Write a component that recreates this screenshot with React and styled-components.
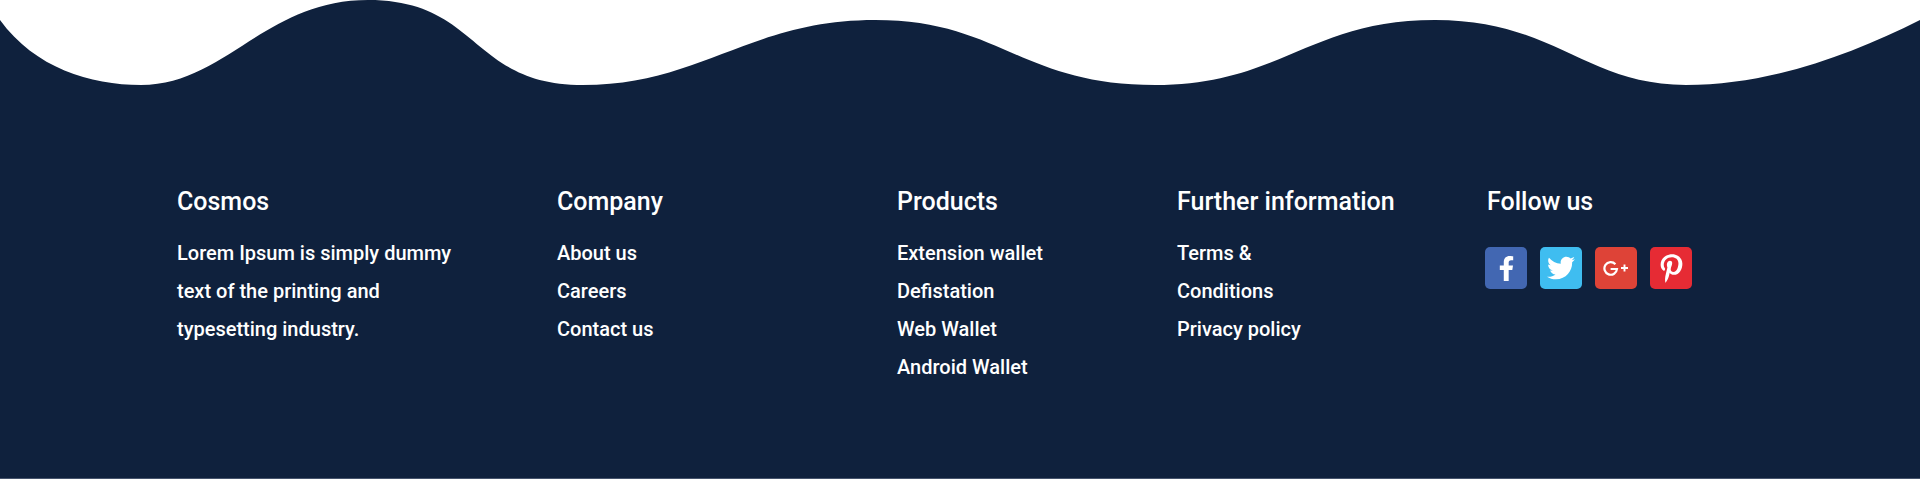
import { createGlobalStyle } from "styled-components";
import styled from "styled-components";
import { FaFacebookF, FaTwitter, FaPinterestP } from "react-icons/fa";

const GlobalStyle = createGlobalStyle`
  html, body {
    margin: 0;
    padding: 0;
    background: #ffffff;
  }
`;

const Footer = styled.footer`
  width: 1920px;
  height: 479px;
  font-family: Roboto, "Liberation Sans", sans-serif;
  color: #ffffff;
  display: flex;
  flex-direction: column;
  overflow: hidden;
`;

const Wave = styled.svg`
  display: block;
  flex: none;
  width: 1920px;
  height: 90px;
`;

const Body = styled.div`
  flex: 1;
  background: #0f213d;
  border-bottom: 1px solid #46546d;
  padding: 95px 0 0 177px;
  display: grid;
  grid-template-columns: 380px 340px 280px 310px 300px;
`;

const Title = styled.h4`
  margin: 0 0 15px;
  font-size: 25px;
  font-weight: 500;
  line-height: 34px;
`;

const Column = styled.div`
  min-width: 0;
`;

const Text = styled.p`
  margin: 0;
  max-width: 290px;
  font-size: 20px;
  font-weight: 500;
  line-height: 38px;
`;

const LinkList = styled.ul`
  margin: 0;
  padding: 0;
  list-style: none;
  max-width: ${(p) => p.$maxWidth || "none"};
`;

const LinkItem = styled.li`
  font-size: 20px;
  font-weight: 500;
  line-height: 38px;
`;

const Socials = styled.div`
  display: flex;
  gap: 13px;
  margin: 0 0 0 -2px;
  padding-top: 13px;
`;

const SocialButton = styled.a`
  width: 42px;
  height: 42px;
  border-radius: 5px;
  background: ${(p) => p.$color};
  color: #ffffff;
  font-size: ${(p) => p.$size}px;
  display: flex;
  align-items: center;
  justify-content: center;
`;

const GooglePlusIcon = () => (
  <svg width="26" height="16" viewBox="0 0 26 16" fill="none" stroke="currentColor" strokeWidth="2.2">
    <path d="M12.4 4.2 A6.3 6.3 0 1 0 14 9 H7.6" />
    <path d="M18 8 H25 M21.5 4.6 V11.4" strokeWidth="1.9" />
  </svg>
);

const columns = [
  { title: "Company", links: ["About us", "Careers", "Contact us"] },
  { title: "Products", links: ["Extension wallet", "Defistation", "Web Wallet", "Android Wallet"] },
  { title: "Further information", links: ["Terms & Conditions", "Privacy policy"], maxWidth: "140px" },
];

const socials = [
  { color: "#4267b2", size: 25, icon: <FaFacebookF /> },
  { color: "#3fbdf0", size: 28, icon: <FaTwitter /> },
  { color: "#de4337", size: 26, icon: <GooglePlusIcon /> },
  { color: "#e62b34", size: 29, icon: <FaPinterestP /> },
];

export default function App() {
  return (
    <>
      <GlobalStyle />
      <Footer>
        <Wave viewBox="0 0 1920 90" preserveAspectRatio="none">
          <path
            fill="#0f213d"
            d="M0 20 C35 68 90 85 141 85 C225 85 265 0 368 0 C480 0 470 85 583 85 C700 85 750 20 875 20 C1000 20 1020 85 1155 85 C1280 85 1310 20 1435 20 C1555 20 1585 85 1686 85 C1770 85 1850 55 1920 20 V90 H0 Z"
          />
        </Wave>
        <Body>
          <Column>
            <Title>Cosmos</Title>
            <Text>Lorem Ipsum is simply dummy text of the printing and typesetting industry.</Text>
          </Column>
          {columns.map((col) => (
            <Column key={col.title}>
              <Title>{col.title}</Title>
              <LinkList $maxWidth={col.maxWidth}>
                {col.links.map((link) => (
                  <LinkItem key={link}>{link}</LinkItem>
                ))}
              </LinkList>
            </Column>
          ))}
          <Column>
            <Title>Follow us</Title>
            <Socials>
              {socials.map((s) => (
                <SocialButton key={s.color} $color={s.color} $size={s.size}>
                  {s.icon}
                </SocialButton>
              ))}
            </Socials>
          </Column>
        </Body>
      </Footer>
    </>
  );
}
